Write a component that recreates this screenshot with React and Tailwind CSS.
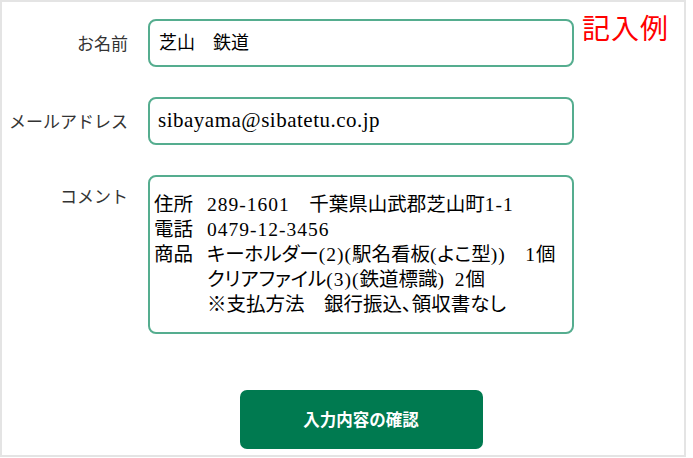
import React from "react";

const labelFont = { fontFamily: '"Noto Sans CJK JP", "Noto Sans", sans-serif' };
const fieldFont = { fontFamily: '"Liberation Serif", "Noto Sans CJK JP", serif' };

// latin runs in the comment are a touch wider than Liberation Serif
function L({ children }) {
  return <span className="tracking-[1px]">{children}</span>;
}

const comment = [
  ["住所", <><L>289-1601</L>　千葉県山武郡芝山町<L>1-1</L></>],
  ["電話", <L>0479-12-3456</L>],
  ["商品", <>キーホルダー<L>(2)(</L>駅名看板<L>(</L>よこ型<L>))</L>　<L>1</L>個</>],
  ["", <>クリアファイル<L>(3)(</L>鉄道標識<L>)</L>{"\u2002"}<L>2</L>個</>],
  ["", <>※支払方法　銀行振込、領収書なし</>],
];

function Label({ children, top }) {
  return (
    <div
      className={`w-[126px] shrink-0 text-right text-[17px] text-[#333] ${top ? "self-start pt-[8px]" : ""}`}
      style={labelFont}
    >
      {children}
    </div>
  );
}

export default function App() {
  return (
    <div className="w-[693px] h-[458px] bg-white">
      <div className="w-[686px] h-[457px] border-2 border-[#e4e4e4] pt-[17px] flex flex-col">
        <div className="flex items-center gap-[20px]">
          <Label>お名前</Label>
          <div
            className="w-[426px] h-[48px] border-2 border-[#55ad8f] rounded-[8px] flex items-center pl-[9px] text-[18px] text-black"
            style={fieldFont}
          >
            芝山　鉄道
          </div>
          <div
            className="self-start -mt-[6px] -ml-[12px] text-[28px] leading-none text-[#ff0000] tracking-[1px]"
            style={labelFont}
          >
            記入例
          </div>
        </div>

        <div className="flex items-center gap-[20px] mt-[30px]">
          <Label>メールアドレス</Label>
          <div
            className="w-[426px] h-[48px] border-2 border-[#55ad8f] rounded-[8px] flex items-center pl-[8px] text-[21px] tracking-[0.5px] text-black"
            style={fieldFont}
          >
            sibayama@sibatetu.co.jp
          </div>
        </div>

        <div className="flex gap-[20px] mt-[30px]">
          <Label top>コメント</Label>
          <div
            className="w-[426px] h-[159px] border-2 border-[#55ad8f] rounded-[8px] pl-[4px] pt-[15px] text-[19.5px] leading-[25px] text-black [font-feature-settings:'palt']"
            style={fieldFont}
          >
            {comment.map(([k, v], i) => (
              <div key={i} className="flex">
                <div className="w-[53px] shrink-0">{k}</div>
                <div className="whitespace-nowrap">{v}</div>
              </div>
            ))}
          </div>
        </div>

        <div className="flex mt-[56px]">
          <div className="w-[146px] shrink-0" />
          <div className="w-[426px] flex justify-center">
            <button
              className="w-[243px] h-[59px] rounded-[7px] bg-[#007a50] text-white text-[16.5px] font-bold"
              style={labelFont}
            >
              入力内容の確認
            </button>
          </div>
        </div>
      </div>
    </div>
  );
}
